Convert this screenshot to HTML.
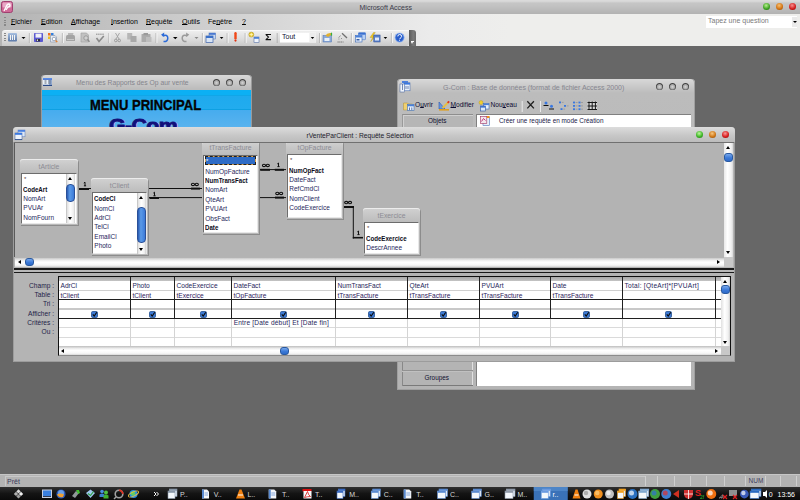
<!DOCTYPE html>
<html><head><meta charset="utf-8">
<style>
*{margin:0;padding:0;box-sizing:border-box}
html,body{width:800px;height:500px;overflow:hidden;background:#676767;font-family:"Liberation Sans",sans-serif;font-size:7px;color:#000;line-height:1}
.a{position:absolute}
svg{position:absolute;overflow:visible}
#title{left:0;top:0;width:800px;height:14px;background:linear-gradient(#dcdcdc 0,#d6d6d6 1.5px,#c6c6c6 3px,#c2c2c2 6px,#bababa 10px,#b2b2b2 14px)}
#menubar{left:0;top:14px;width:800px;height:32px;background:linear-gradient(90deg,#b4b4b4 0,#ebebeb 430px,#eeeeec 510px)}
#toolbar{left:2px;top:30px;width:407px;height:16px;background:linear-gradient(#eeeeee,#dcdcdc 55%,#c8c8c8);border-radius:3px 0 3px 0;border-top:1px solid #f8f8f8}
.mi{top:18px;font-size:7px;color:#000;white-space:nowrap}
.mi u,u{text-decoration:underline;text-underline-offset:0.3px;text-decoration-thickness:0.8px}
#status{left:0;top:474px;width:800px;height:13px;background:#b0b0b0;border-top:1px solid #d4d4d4}
#taskbar{left:0;top:487px;width:800px;height:13px;background:linear-gradient(#2e2e2e,#0e0e0e)}
.win{background:linear-gradient(#d8d8d8,#bcbcbc 14px,#b4b4b4);border-radius:4px 4px 0 0}
.circ{width:7px;height:7px;border-radius:50%;position:absolute}
.gc{background:radial-gradient(circle at 50% 55%,#d8d8d8 0,#a4a4a4 45%,#3c3c3c 62%,#5a5a5a 85%,#9a9a9a 100%)}
.t{white-space:nowrap}
</style></head><body>
<!-- TITLE BAR -->
<div id="title" class="a"></div>
<svg class="a" style="left:1px;top:1px" width="12" height="12" viewBox="0 0 12 12"><rect x="0.5" y="0.5" width="11" height="11" rx="2" fill="#d06a98" stroke="#a04070"/><rect x="1.5" y="1.5" width="9" height="5" rx="1" fill="#e8a8c6"/><path d="M3 10 L6 4 Q8 2 9 4 Q9 6 7 6 L5 9" stroke="#fff" stroke-width="1.3" fill="none"/></svg>
<div class="a t" style="left:359.5px;top:4px;font-size:7px;color:#3a3a4a">Microsoft Access</div>
<div class="circ" style="left:763px;top:3px;background:radial-gradient(circle at 45% 35%,#b8f090,#3aa020 60%,#1d6010)"></div>
<div class="circ" style="left:776px;top:3px;background:radial-gradient(circle at 45% 35%,#f8c070,#d07010 60%,#804000)"></div>
<div class="circ" style="left:789px;top:3px;background:radial-gradient(circle at 45% 35%,#f89090,#d01818 60%,#800000)"></div>

<!-- MENU BAR -->
<div id="menubar" class="a"></div>
<div class="a" style="left:4px;top:17px;width:2px;height:10px;background:repeating-linear-gradient(#888 0 1px,transparent 1px 2.5px)"></div>
<div class="a mi" style="left:11px"><u>F</u>ichier</div>
<div class="a mi" style="left:41px"><u>E</u>dition</div>
<div class="a mi" style="left:71px"><u>A</u>ffichage</div>
<div class="a mi" style="left:111px"><u>I</u>nsertion</div>
<div class="a mi" style="left:146px"><u>R</u>equête</div>
<div class="a mi" style="left:182px"><u>O</u>utils</div>
<div class="a mi" style="left:208px">Fe<u>n</u>être</div>
<div class="a mi" style="left:242px"><u>?</u></div>
<div class="a" style="left:706px;top:16px;width:91px;height:12px;background:#fff"></div>
<div class="a" style="left:708px;top:17px;font-size:7px;color:#7a7a7a">Tapez une question</div>
<div class="a" style="left:792px;top:17px;width:5px;height:10px;background:#eaeaea"></div><div class="a" style="left:792.6px;top:21px;width:0;height:0;border-left:2px solid transparent;border-right:2px solid transparent;border-top:2px solid #000"></div>

<!-- TOOLBAR -->
<div id="toolbar" class="a"></div>
<div class="a" style="left:409px;top:30px;width:6.5px;height:16px;background:linear-gradient(90deg,#5a5a5a,#7a7a7a 60%,#6a6a6a);border-radius:0 3px 0 0"></div>
<div class="a" style="left:410.5px;top:40.5px;width:3.5px;height:1px;background:#fff"></div>
<div class="a" style="left:410.5px;top:42px;width:0;height:0;border-left:1.75px solid transparent;border-right:1.75px solid transparent;border-top:2px solid #fff"></div>
<div class="a" style="left:4px;top:33px;width:2px;height:10px;background:repeating-linear-gradient(#888 0 1px,transparent 1px 2.5px)"></div>
<!-- icons -->
<svg class="a" style="left:0;top:29px" width="420" height="17" viewBox="0 0 420 17">
 <defs>
  <linearGradient id="gb" x1="0" y1="0" x2="0" y2="1"><stop offset="0" stop-color="#a8c0e0"/><stop offset="1" stop-color="#5a78a8"/></linearGradient>
  <linearGradient id="gw" x1="0" y1="0" x2="0" y2="1"><stop offset="0" stop-color="#9ab8f0"/><stop offset="1" stop-color="#3a68b8"/></linearGradient>
 </defs>
 <g fill="#000">
  <path d="M21.5 8h4l-2 2z"/><path d="M173 8h4.5l-2.2 2.2z"/><path d="M194.5 8h4l-2 2z" fill="#888"/>
  <path d="M219.8 8h3.6l-1.8 2z"/><path d="M383.6 8h3.6l-1.8 2z"/>
 </g>
 <g stroke="#a8a8a8" stroke-width=".8">
  <path d="M29.4 4v10M108.9 4v10M156 4v10M202.4 4v10M227.2 4v10M245.2 4v10M277.2 4v10M319.5 4v10M351.4 4v10M391.4 4v10M62.4 4v10"/>
 </g>
 <g stroke="#ffffff" stroke-width=".8">
  <path d="M30.3 4v10M109.8 4v10M156.9 4v10M203.3 4v10M228.1 4v10M246.1 4v10M320.4 4v10M352.3 4v10M392.3 4v10M63.3 4v10"/>
 </g>
 <!-- view icon -->
 <rect x="8" y="4" width="9" height="8.5" rx="1" fill="url(#gb)"/><path d="M10.5 6v5M12.5 6v5M14.5 6v5" stroke="#f4f4f4" stroke-width="1"/>
 <!-- save -->
 <rect x="34" y="4" width="9" height="9" rx=".8" fill="#5a58d0"/><rect x="35.5" y="4.6" width="6" height="4" fill="#f0f0f8"/><rect x="36" y="10" width="4" height="2.5" fill="#303040"/><rect x="36.8" y="10.4" width="1.2" height="1.6" fill="#ddd"/>
 <!-- db icon -->
 <rect x="48" y="4" width="2.5" height="2.5" fill="#f07020"/><rect x="51" y="4" width="2.5" height="2.5" fill="#3080e0"/><rect x="48" y="7.5" width="2.5" height="2.5" fill="#f0c020"/><rect x="51" y="7.5" width="2" height="2" fill="#40a040"/>
 <path d="M50.5 6.5h4.5l1.5 1.5v5h-6z" fill="#e8ecf4" stroke="#8090a8" stroke-width=".6"/><circle cx="54" cy="10" r="1.8" fill="#fff" stroke="#7a8aa0" stroke-width=".7"/><path d="M55.5 11.5l1.8 1.6" stroke="#e08030" stroke-width="1.4"/>
 <!-- print -->
 <path d="M66 7.5q0-1.5 1.5-1.5h6q1.5 0 1.5 1.5v4.5h-9z" fill="#a4a4a4"/><path d="M68 4h5.5l-.5 2h-5z" fill="#b8b8b8"/><path d="M67 10.5h7" stroke="#c8c8c8"/>
 <!-- preview -->
 <path d="M81 4h5.5l2 2v7h-7.5z" fill="#c2c2c2" stroke="#a0a0a0" stroke-width=".6"/><circle cx="86" cy="9" r="2.2" fill="#d0d0d0" stroke="#909090" stroke-width=".8"/><path d="M87.5 10.5l2 2.2" stroke="#8a8a8a" stroke-width="1.3"/>
 <!-- spell -->
 <path d="M96 5.2h8" stroke="#8a8a8a" stroke-width="1" stroke-dasharray="1.5 .6"/><path d="M96.5 9l2.5 3.5 4.8-5.6" stroke="#8a8a8a" stroke-width="1.6" fill="none"/>
 <!-- cut -->
 <path d="M115.5 4l3.5 6M119.5 4l-3.5 6" stroke="#a0a0a0" stroke-width=".9"/><circle cx="115.8" cy="11.5" r="1.3" fill="none" stroke="#9a9a9a" stroke-width="1"/><circle cx="119.2" cy="11.5" r="1.3" fill="none" stroke="#9a9a9a" stroke-width="1"/>
 <!-- copy -->
 <rect x="127.2" y="4" width="5" height="6.5" fill="#b6b6b6"/><rect x="130.5" y="7" width="6" height="6" fill="#a8a8a8"/>
 <!-- paste -->
 <rect x="141.5" y="5" width="9" height="8" rx=".5" fill="#ababab"/><rect x="143.5" y="4" width="4.5" height="2.2" fill="#9a9a9a"/><rect x="146" y="8" width="5.5" height="5" fill="#bdbdbd"/>
 <!-- undo -->
 <path d="M162.5 6.8Q167.8 5 167.8 9Q167.8 12.8 163.5 12.6" stroke="#2a6ad8" stroke-width="1.5" fill="none"/><path d="M161 5.8l3.2-2.2v4.4z" fill="#2a6ad8"/>
 <!-- redo -->
 <path d="M187.5 6.8Q182.2 5 182.2 9Q182.2 12.8 186.5 12.6" stroke="#9a9a9a" stroke-width="1.5" fill="none"/><path d="M189.3 5.8l-3.2-2.2v4.4z" fill="#9a9a9a"/>
 <!-- window icon -->
 <rect x="209" y="4" width="6.5" height="6" fill="#c8d8f0" stroke="#5a80c0" stroke-width=".6"/><rect x="209" y="4" width="6.5" height="1.8" fill="#4a78d0"/>
 <rect x="206" y="7" width="7" height="6.5" fill="#d8e4f4" stroke="#3a60a8" stroke-width=".7"/><rect x="206" y="7" width="7" height="2" fill="#3a70c8"/>
 <!-- ! -->
 <path d="M235.5 4.2v5" stroke="#f04818" stroke-width="2.4" stroke-linecap="round"/><circle cx="235.5" cy="11.6" r="1.1" fill="#e03010"/>
 <!-- show table -->
 <circle cx="251.3" cy="5.6" r="2.5" fill="#e8c830" stroke="#a08010" stroke-width=".4"/><path d="M251.3 3.8v3.6M249.5 5.6h3.6" stroke="#fff6c0" stroke-width=".8"/><rect x="254" y="8" width="5" height="5.5" fill="#f0f4fa" stroke="#3a5a98" stroke-width=".5"/><rect x="254" y="8" width="5" height="1.8" fill="#4a80d8"/>
 <!-- sigma -->
 <path d="M265.6 5.4h5.4M266 5.6l2.5 2.5-2.5 2.5M265.6 10.6h5.4" stroke="#101010" stroke-width="1.05" fill="none"/>
 <!-- combo -->
 <rect x="280" y="3.7" width="36" height="9.8" fill="#fff"/><rect x="309.4" y="4" width="6.4" height="9.3" fill="#ececec"/>
 <path d="M310.8 8h3.4l-1.7 2z" fill="#000"/>
 <text x="282" y="10.2" font-family="Liberation Sans" font-size="7" fill="#101030">Tout</text>
 <!-- properties -->
 <rect x="323" y="6.5" width="8.5" height="6.5" fill="#8aa8d8" stroke="#4a70b0" stroke-width=".5"/><rect x="324.5" y="9" width="5" height="3" fill="#e8f0fa"/><path d="M325.5 6.5q1.5-3 5.5-2.5l1 1.5-4 2.5z" fill="#e0b030"/><path d="M331.5 3.7v3" stroke="#30b040" stroke-width="1.2"/>
 <!-- build -->
 <path d="M342 4.2l5 4.8" stroke="#707070" stroke-width="1.3"/><path d="M340.5 6.5l-1.8 2.2M338.4 10h1M341 9.5h1" stroke="#808080" stroke-width=".8"/><path d="M337.5 13h6" stroke="#707070" stroke-width="1" stroke-dasharray="1.2 .6"/>
 <!-- db window -->
 <rect x="358.5" y="3.7" width="7" height="7" rx=".6" fill="#b8d0f4" stroke="#4a78c8" stroke-width=".6"/><rect x="358.5" y="3.7" width="7" height="2" fill="#3a70d0"/>
 <rect x="355.5" y="6.5" width="6.5" height="6.5" fill="#e8f0fa" stroke="#3a68b8" stroke-width=".6"/><rect x="355.5" y="6.5" width="6.5" height="2" fill="#4a80d8"/><rect x="356.5" y="10" width="3" height="1.5" fill="#3a60a8"/>
 <!-- new object -->
 <path d="M373.5 3.5l-3.5 5h2.5l-1.8 4.2 4.6-5.6h-2.4l2.4-3.6z" fill="#f0c820" stroke="#a08010" stroke-width=".3"/><rect x="373.8" y="6" width="6.3" height="7" fill="#5a80c8" stroke="#2a4a90" stroke-width=".5"/><rect x="375" y="8.5" width="4" height="3" fill="#e0e8f8"/>
 <!-- help -->
 <circle cx="399.6" cy="8.6" r="4.7" fill="#3870d8" stroke="#b8ccf0" stroke-width=".7"/><circle cx="399.6" cy="8.6" r="3.3" fill="#2a5cc8"/><path d="M397.8 7.4q0-1.9 1.9-1.9t1.9 1.9q0 1-1.4 1.8l-.5 1" stroke="#fff" stroke-width="1" fill="none"/><circle cx="399.6" cy="11.2" r=".55" fill="#fff"/>
</svg>
<!-- Menu des Rapports window -->
<div class="a win" style="left:41px;top:75px;width:211px;height:60px;box-shadow:inset 1px 0 #9a9a9a,inset -1px 0 #9a9a9a"></div>
<svg style="left:43px;top:78px" width="9" height="8"><defs><linearGradient id="ib" x1="0" y1="0" x2="0" y2="1"><stop offset="0" stop-color="#6a9ef0"/><stop offset="1" stop-color="#2a5ac8"/></linearGradient></defs><rect x="0" y="0" width="9" height="8" fill="#e8f0fa"/><rect x="0" y="0" width="9" height="1.8" fill="url(#ib)"/><rect x="0" y="6.8" width="9" height="1.2" fill="#2a4a88"/><path d="M1.5 3h2M5 3h3M1.5 5h2M5 5h3" stroke="#404850" stroke-width=".8"/><rect x="6" y="2" width="3" height="5" fill="#5a7ab0" opacity=".6"/></svg>
<div class="a t" style="left:76px;top:79.5px;color:#84848c;font-size:6.75px">Menu des Rapports des Op aur vente</div>
<div class="circ gc" style="left:213px;top:79px"></div>
<div class="circ gc" style="left:226px;top:79px"></div>
<div class="circ gc" style="left:239px;top:79px"></div>
<div class="a" style="left:42px;top:90px;width:209px;height:40px;background:linear-gradient(#0cb0f4 0,#0cb0f4 5px,#10a6e8 5px,#10a6e8 6px,#1eaaee 6px,#22acee 19px,#0ea0e2 19px,#0ea0e2 20px,#46acee 20px,#5cb4ee 40px)"></div>
<div class="a t" style="left:89.5px;top:97.5px;font-family:'Liberation Sans';font-weight:bold;font-size:14px;transform:scaleX(0.93);transform-origin:0 0;color:#050505;-webkit-text-stroke:0.35px #050505">MENU PRINCIPAL</div>
<div class="a" style="left:42px;top:90px;width:209px;height:37px;overflow:hidden"><div class="a t" style="left:68.2px;top:26.3px;font-family:'Liberation Sans';font-weight:bold;font-size:19px;color:#f08cc8;transform:scaleX(1.12);transform-origin:0 0;letter-spacing:-0.5px">G-Com</div><div class="a t" style="left:67px;top:25.5px;font-family:'Liberation Sans';font-weight:bold;font-size:19px;color:#10107a;-webkit-text-stroke:0.8px #10107a;transform:scaleX(1.12);transform-origin:0 0;letter-spacing:-0.5px">G-Com</div></div>

<!-- G-Com database window -->
<div class="a win" style="left:397px;top:79px;width:298px;height:311px;box-shadow:inset 1px 0 #a0a0a0,inset -1px 0 #a0a0a0,inset 0 -1px #a0a0a0"></div>
<svg style="left:400px;top:81px" width="10" height="11"><rect x="2" y="0" width="6" height="9" fill="#d8e8fa"/><rect x="2" y="0" width="6" height="2" fill="#4a80e0"/><rect x="4" y="1.8" width="6" height="8" fill="#e8f0fa" stroke="#3a60a8" stroke-width=".5"/><rect x="4" y="1.8" width="6" height="1.8" fill="#3a78e0"/><rect x="0" y="3" width="4.5" height="8" fill="#f0f4fa" stroke="#3a5a98" stroke-width=".5"/><path d="M2.5 3v6M6 5v3M8 5v3" stroke="#3a5a98" stroke-width=".7"/></svg>
<div class="a t" style="left:443px;top:84px;color:#868690">G-Com : Base de données (format de fichier Access 2000)</div>
<div class="circ gc" style="left:656px;top:83px"></div>
<div class="circ gc" style="left:669px;top:83px"></div>
<div class="circ gc" style="left:682px;top:83px"></div>
<!-- db toolbar -->
<svg style="left:403px;top:99.5px" width="200" height="12">
 <path d="M0.5 3h4l1 1h4v6h-9z" fill="#f0d070" stroke="#b09030" stroke-width=".5"/><rect x="4.5" y="4.5" width="6.5" height="6" fill="#e8f0fa" stroke="#3a6ab0" stroke-width=".6"/><rect x="4.5" y="4.5" width="6.5" height="1.8" fill="#4a80d8"/><path d="M6.5 7.5v2.5M8.8 7.5v2.5" stroke="#3a5aa0" stroke-width=".8"/>
 <path d="M36 2v7h6z" fill="#6a98e0" stroke="#2a58b0" stroke-width=".6"/><path d="M36 9.8h10" stroke="#e0a020" stroke-width="1.6"/><path d="M39.5 8l6-6" stroke="#e8c040" stroke-width="1.8"/><path d="M44.6 2.9l1.6-1.6" stroke="#e03020" stroke-width="1.8"/>
 <circle cx="78" cy="2.6" r="2" fill="#f0d030" stroke="#b09020" stroke-width=".4"/><rect x="80.5" y="3.5" width="5.5" height="5.5" fill="#e8f0fa" stroke="#3a6ab0" stroke-width=".6"/><rect x="80.5" y="3.5" width="5.5" height="1.6" fill="#4a80d8"/><rect x="77.5" y="6" width="5" height="5" fill="#dce8f8" stroke="#2a50a0" stroke-width=".6"/><rect x="77.5" y="6" width="5" height="1.6" fill="#3a70d0"/>
 <path d="M119.2 1v11M137.5 1v11" stroke="#f0f0f0" stroke-width=".9"/>
 <path d="M124.3 1.2l6.6 7.2M130.9 1.2l-6.6 7.2" stroke="#202020" stroke-width="1.3"/>
 <circle cx="143" cy="3" r="1.5" fill="#3a78e0"/><path d="M140.5 5.5h5" stroke="#101010" stroke-width="1"/><circle cx="148.5" cy="6.3" r="1.5" fill="#3a78e0"/><path d="M146 9h5" stroke="#101010" stroke-width="1"/>
 <rect x="156" y="1.5" width="2" height="1.8" fill="#3a78e0"/><path d="M158.8 2.4h1.8" stroke="#888" stroke-width=".6"/>
 <rect x="161" y="5" width="2" height="1.8" fill="#3a78e0"/><path d="M163.8 5.9h1.8" stroke="#888" stroke-width=".6"/>
 <rect x="157.5" y="8.2" width="2" height="1.8" fill="#3a78e0"/><path d="M160.3 9.1h1.8" stroke="#888" stroke-width=".6"/>
 <g fill="#3a78e0"><rect x="170" y="1.6" width="2" height="1.8"/><rect x="170" y="5" width="2" height="1.8"/><rect x="170" y="8.3" width="2" height="1.8"/><rect x="175.5" y="1.6" width="2" height="1.8"/><rect x="175.5" y="5" width="2" height="1.8"/><rect x="175.5" y="8.3" width="2" height="1.8"/></g>
 <g stroke="#888" stroke-width=".6"><path d="M172.6 2.5h2M172.6 5.9h2M172.6 9.2h2M178 2.5h2M178 5.9h2M178 9.2h2"/></g>
 <rect x="184.5" y="1.5" width="9.5" height="8.5" fill="#d8d8d8"/><path d="M184.5 2.5h9.5M184.5 6h9.5M184.5 9.5h9.5" stroke="#181818" stroke-width="1.2"/><path d="M186 1.5v8.5M189.2 1.5v8.5M192.4 1.5v8.5" stroke="#181818" stroke-width="1"/>
</svg>
<div class="a t" style="left:415px;top:102.3px;color:#0a0a30;font-size:6.6px">O<u>u</u>vrir</div>
<div class="a t" style="left:450.5px;top:102.3px;color:#0a0a30;font-size:6.6px"><u>M</u>odifier</div>
<div class="a t" style="left:490.5px;top:102.3px;color:#0a0a30;font-size:6.6px">Nou<u>v</u>eau</div>
<!-- objets column -->
<div class="a" style="left:402px;top:114px;width:71px;height:272px;background:#b4b4b4;box-shadow:inset 1px 1px #888,inset -1px 0 #e0e0e0"></div>
<div class="a" style="left:402px;top:114px;width:71px;height:13px;background:#b6b6b6;border-top:1px solid #8e8e8e;border-left:1px solid #9a9a9a;box-shadow:inset 1px 1px #d0d0d0"></div>
<div class="a t" style="left:428px;top:118.2px;color:#101030;font-size:6.4px">Objets</div>
<div class="a" style="left:402px;top:370px;width:71px;height:2px;background:linear-gradient(#7a7a7a,#d8d8d8)"></div>
<div class="a" style="left:403px;top:385px;width:70px;height:1px;background:#7a7a7a"></div>
<div class="a t" style="left:424.5px;top:375px;color:#101030;font-size:6.4px">Groupes</div>
<!-- white list -->
<div class="a" style="left:476px;top:114px;width:215px;height:272px;background:#fff;box-shadow:inset 1px 1px #808080"></div>
<svg style="left:480px;top:116px" width="10" height="10"><rect x="3" y="1" width="6.5" height="8.5" fill="#e8f0fa" stroke="#4a70b8" stroke-width=".6"/><rect x=".3" y=".3" width="6.5" height="7" fill="#f4e8ee" stroke="#a03060" stroke-width=".6"/><path d="M1.5 5.5l2-3 2 2" stroke="#c04080" stroke-width="1" fill="none"/><rect x="7" y="0" width="2.5" height="2" fill="#f09020"/></svg>
<div class="a t" style="left:499px;top:118.3px;color:#1a1a48;font-size:6.4px">Créer une requête en mode Création</div>
<div class="a" style="left:13px;top:127px;width:722px;height:235px;background:#b4b4b4;border-radius:4px 4px 0 0;box-shadow:inset 1px 0 #9c9c9c,inset -1px 0 #9c9c9c,inset 0 -1px #9c9c9c"></div>
<div class="a" style="left:13px;top:127px;width:722px;height:15px;background:linear-gradient(#dcdcdc,#c6c6c6 60%,#bcbcbc);border-radius:4px 4px 0 0"></div>
<div class="a" style="left:14px;top:142px;width:720px;height:1px;background:#707070"></div>
<svg style="left:15px;top:130px" width="10" height="10"><rect x="3" y="0" width="7" height="6.8" fill="#dce8f8" stroke="#5a7ab8" stroke-width=".5"/><rect x="3" y="0" width="7" height="1.8" fill="#4a80e0"/><rect x="0" y="3" width="7" height="6.8" fill="#eef4fc" stroke="#3a5a98" stroke-width=".5"/><rect x="0" y="3" width="7" height="1.8" fill="#3a78e0"/><rect x="0" y="9" width="7" height=".8" fill="#2a4a88"/></svg>
<div class="a t" style="left:306.5px;top:133.1px;color:#1c1c2c;font-size:6.7px">rVenteParClient : Requête Sélection</div>
<div class="circ" style="left:696px;top:131px;background:radial-gradient(circle at 45% 35%,#c0f8a0,#40b828 55%,#1a6a10)"></div>
<div class="circ" style="left:709px;top:131px;background:radial-gradient(circle at 45% 35%,#f8c880,#d07818 55%,#804000)"></div>
<div class="circ" style="left:722px;top:131px;background:radial-gradient(circle at 45% 35%,#f89898,#d82020 55%,#800000)"></div>
<div class="a" style="left:14px;top:143px;width:710px;height:114px;background:#b3b3b3;box-shadow:inset 1px 0 #5a5a5a"></div>
<div class="a" style="left:724px;top:143px;width:9px;height:114px;background:linear-gradient(90deg,#e8e8e8,#fff 40%,#f0f0f0 80%,#d8d8d8)"></div>
<div class="a" style="left:726px;top:146px;width:0;height:0;border-left:2.5px solid transparent;border-right:2.5px solid transparent;border-bottom:3px solid #000"></div>
<div class="a" style="left:726px;top:251px;width:0;height:0;border-left:2.5px solid transparent;border-right:2.5px solid transparent;border-top:3px solid #000"></div>
<div class="a" style="left:724px;top:153px;width:9px;height:9px;border-radius:3px;background:linear-gradient(#78a8ec,#3c7ad8 55%,#2e6ac8);border:1px solid #2a5aa0"></div>
<div class="a" style="left:15px;top:257.5px;width:709px;height:9.5px;background:linear-gradient(#c8c8c8,#f4f4f4 30%,#fff 50%,#f6f6f6 80%,#d4d4d4)"></div>
<div class="a" style="left:18px;top:260px;width:0;height:0;border-top:2.5px solid transparent;border-bottom:2.5px solid transparent;border-right:3px solid #000"></div>
<div class="a" style="left:717px;top:260px;width:0;height:0;border-top:2.5px solid transparent;border-bottom:2.5px solid transparent;border-left:3px solid #000"></div>
<div class="a" style="left:25px;top:258px;width:8.5px;height:8.3px;border-radius:3px;background:linear-gradient(#78a8ec,#3c7ad8 55%,#2e6ac8);border:1px solid #2a5aa0"></div>
<div class="a" style="left:724px;top:257px;width:9px;height:10px;background:#c8c8c8"></div>
<div class="a" style="left:14px;top:267px;width:720px;height:6px;background:linear-gradient(#b4b4b4 0,#b4b4b4 1px,#1a1a1a 1px,#1a1a1a 3px,#b8b8b8 3px,#b8b8b8 5px,#1a1a1a 5px)"></div>
<div class="a" style="left:14px;top:143px;width:710px;height:114px;overflow:hidden"><div class="a" style="left:-14px;top:-143px;width:800px;height:500px">
<svg style="left:0;top:0" width="800" height="500">
<path d="M77 188.5H202" stroke="#101010" stroke-width="1"/><path d="M79 189H89" stroke="#101010" stroke-width="2"/><path d="M191 188.6H200" stroke="#101010" stroke-width="2"/><path d="M85.0 182.2V185.79999999999998M83.8 183.1L85.0 182.2M83.9 185.79999999999998H86.1" stroke="#101010" stroke-width="1"/><ellipse cx="193" cy="184.4" rx="1.6" ry="1.2" fill="none" stroke="#101010" stroke-width="1.1"/><ellipse cx="196.8" cy="184.4" rx="1.6" ry="1.2" fill="none" stroke="#101010" stroke-width="1.1"/><path d="M148 197.6H287" stroke="#101010" stroke-width="1"/><path d="M149.5 198H159" stroke="#101010" stroke-width="2"/><path d="M275 197.6H284" stroke="#101010" stroke-width="2"/><path d="M154.5 192.2V195.79999999999998M153.3 193.1L154.5 192.2M153.4 195.79999999999998H155.6" stroke="#101010" stroke-width="1"/><ellipse cx="277.3" cy="193.4" rx="1.6" ry="1.2" fill="none" stroke="#101010" stroke-width="1.1"/><ellipse cx="281.1" cy="193.4" rx="1.6" ry="1.2" fill="none" stroke="#101010" stroke-width="1.1"/><path d="M259 169.6H287" stroke="#101010" stroke-width="1"/><path d="M260.2 169.8H270" stroke="#101010" stroke-width="2"/><path d="M274.8 169.8H284" stroke="#101010" stroke-width="2"/><path d="M278.5 163V166.6M277.3 163.9L278.5 163M277.4 166.6H279.6" stroke="#101010" stroke-width="1"/><ellipse cx="264" cy="165.4" rx="1.6" ry="1.2" fill="none" stroke="#101010" stroke-width="1.1"/><ellipse cx="267.8" cy="165.4" rx="1.6" ry="1.2" fill="none" stroke="#101010" stroke-width="1.1"/><path d="M343 207H354" stroke="#101010" stroke-width="2"/><path d="M353.3 206V238.5" stroke="#101010" stroke-width="1"/><path d="M352.8 237.7H363.5" stroke="#101010" stroke-width="1.6"/><path d="M358.5 231V234.6M357.3 231.9L358.5 231M357.4 234.6H359.6" stroke="#101010" stroke-width="1"/><ellipse cx="346.2" cy="202.6" rx="1.6" ry="1.2" fill="none" stroke="#101010" stroke-width="1.1"/><ellipse cx="350.0" cy="202.6" rx="1.6" ry="1.2" fill="none" stroke="#101010" stroke-width="1.1"/>
</svg>
<div class="a" style="left:20px;top:159px;width:58px;height:66px;background:linear-gradient(#d2d2d2,#c8c8c8 6px,#bebebe 13px,#b8b8b8 15px);border-radius:3px 3px 0 0;box-shadow:1px 1px 0 #8c8c8c,inset 0 1px #ececec"></div>
<div class="a t" style="left:20px;top:164px;width:58px;text-align:center;color:#8c8c94;font-size:6.8px">tArticle</div>
<div class="a" style="left:21px;top:173px;width:56px;height:51px;background:#fff;border:1px solid #6c6c6c;border-right-color:#e8e8e8;border-bottom-color:#e8e8e8"></div>
<div class="a t" style="left:24px;top:176.3px;font-size:6px;color:#604040">*</div>
<div class="a t" style="left:23.3px;top:186.5px;font-size:6.5px;font-weight:bold;color:#0c0c20;font-size:6.6px;transform:scaleX(0.93);transform-origin:0 0">CodeArt</div>
<div class="a t" style="left:23.3px;top:195.9px;font-size:6.5px;color:#26265a">NomArt</div>
<div class="a t" style="left:23.3px;top:205.3px;font-size:6.5px;color:#26265a">PVUAr</div>
<div class="a t" style="left:23.3px;top:214.70000000000002px;font-size:6.5px;color:#26265a">NomFourn</div>
<div class="a" style="left:66px;top:174px;width:9px;height:49px;background:linear-gradient(90deg,#e0e0e0,#fff 40%,#f0f0f0 80%,#d0d0d0);border-left:1px solid #c8c8c8"></div>
<div class="a" style="left:68px;top:177px;width:0;height:0;border-left:2.5px solid transparent;border-right:2.5px solid transparent;border-bottom:3px solid #000"></div>
<div class="a" style="left:68px;top:217px;width:0;height:0;border-left:2.5px solid transparent;border-right:2.5px solid transparent;border-top:3px solid #000"></div>
<div class="a" style="left:66px;top:184px;width:9px;height:18px;border-radius:4px;background:linear-gradient(90deg,#2a5ab0,#5a9ae8 40%,#3c7ad8);border:1px solid #2a5098"></div>
<div class="a" style="left:91px;top:178px;width:57px;height:77px;background:linear-gradient(#d2d2d2,#c8c8c8 6px,#bebebe 13px,#b8b8b8 15px);border-radius:3px 3px 0 0;box-shadow:1px 1px 0 #8c8c8c,inset 0 1px #ececec"></div>
<div class="a t" style="left:91px;top:183px;width:57px;text-align:center;color:#8c8c94;font-size:6.8px">tClient</div>
<div class="a" style="left:92px;top:192px;width:55px;height:62px;background:#fff;border:1px solid #6c6c6c;border-right-color:#e8e8e8;border-bottom-color:#e8e8e8"></div>
<div class="a t" style="left:94.3px;top:196.1px;font-size:6.5px;font-weight:bold;color:#0c0c20;font-size:6.6px;transform:scaleX(0.93);transform-origin:0 0">CodeCl</div>
<div class="a t" style="left:94.3px;top:205.5px;font-size:6.5px;color:#26265a">NomCl</div>
<div class="a t" style="left:94.3px;top:214.9px;font-size:6.5px;color:#26265a">AdrCl</div>
<div class="a t" style="left:94.3px;top:224.3px;font-size:6.5px;color:#26265a">TelCl</div>
<div class="a t" style="left:94.3px;top:233.70000000000002px;font-size:6.5px;color:#26265a">EmailCl</div>
<div class="a t" style="left:94.3px;top:243.10000000000002px;font-size:6.5px;color:#26265a">Photo</div>
<div class="a" style="left:137px;top:193px;width:9px;height:61px;background:linear-gradient(90deg,#e0e0e0,#fff 40%,#f0f0f0 80%,#d0d0d0);border-left:1px solid #c8c8c8"></div>
<div class="a" style="left:139px;top:196px;width:0;height:0;border-left:2.5px solid transparent;border-right:2.5px solid transparent;border-bottom:3px solid #000"></div>
<div class="a" style="left:139px;top:248px;width:0;height:0;border-left:2.5px solid transparent;border-right:2.5px solid transparent;border-top:3px solid #000"></div>
<div class="a" style="left:137px;top:207px;width:9px;height:36px;border-radius:4px;background:linear-gradient(90deg,#2a5ab0,#5a9ae8 40%,#3c7ad8);border:1px solid #2a5098"></div>
<div class="a" style="left:202px;top:141px;width:57px;height:93px;background:linear-gradient(#d2d2d2,#c8c8c8 6px,#bebebe 13px,#b8b8b8 15px);border-radius:3px 3px 0 0;box-shadow:1px 1px 0 #8c8c8c,inset 0 1px #ececec"></div>
<div class="a t" style="left:202px;top:145px;width:57px;text-align:center;color:#8c8c94;font-size:6.8px">tTransFacture</div>
<div class="a" style="left:203px;top:155px;width:55px;height:78px;background:#fff;border:1px solid #6c6c6c;border-right-color:#e8e8e8;border-bottom-color:#e8e8e8"></div>
<div class="a" style="left:205px;top:156px;width:51px;height:9px;background:#2f6cc6;border:1px solid #d8a050"></div>
<div class="a" style="left:205px;top:156px;width:51px;height:9px;border:1px dashed #202020"></div>
<div class="a t" style="left:206px;top:158.3px;font-size:6px;color:#fff">*</div>
<div class="a t" style="left:205.3px;top:168.5px;font-size:6.5px;color:#26265a">NumOpFacture</div>
<div class="a t" style="left:205.3px;top:177.9px;font-size:6.5px;font-weight:bold;color:#0c0c20;font-size:6.6px;transform:scaleX(0.93);transform-origin:0 0">NumTransFact</div>
<div class="a t" style="left:205.3px;top:187.3px;font-size:6.5px;color:#26265a">NomArt</div>
<div class="a t" style="left:205.3px;top:196.70000000000002px;font-size:6.5px;color:#26265a">QteArt</div>
<div class="a t" style="left:205.3px;top:206.10000000000002px;font-size:6.5px;color:#26265a">PVUArt</div>
<div class="a t" style="left:205.3px;top:215.50000000000003px;font-size:6.5px;color:#26265a">ObsFact</div>
<div class="a t" style="left:205.3px;top:224.90000000000003px;font-size:6.5px;font-weight:bold;color:#0c0c20;font-size:6.6px;transform:scaleX(0.93);transform-origin:0 0">Date</div>
<div class="a" style="left:286px;top:141px;width:57px;height:78px;background:linear-gradient(#d2d2d2,#c8c8c8 6px,#bebebe 13px,#b8b8b8 15px);border-radius:3px 3px 0 0;box-shadow:1px 1px 0 #8c8c8c,inset 0 1px #ececec"></div>
<div class="a t" style="left:286px;top:145px;width:57px;text-align:center;color:#8c8c94;font-size:6.8px">tOpFacture</div>
<div class="a" style="left:287px;top:154px;width:55px;height:64px;background:#fff;border:1px solid #6c6c6c;border-right-color:#e8e8e8;border-bottom-color:#e8e8e8"></div>
<div class="a t" style="left:290px;top:157.3px;font-size:6px;color:#604040">*</div>
<div class="a t" style="left:289.3px;top:167.5px;font-size:6.5px;font-weight:bold;color:#0c0c20;font-size:6.6px;transform:scaleX(0.93);transform-origin:0 0">NumOpFact</div>
<div class="a t" style="left:289.3px;top:176.9px;font-size:6.5px;color:#26265a">DateFact</div>
<div class="a t" style="left:289.3px;top:186.3px;font-size:6.5px;color:#26265a">RefCmdCl</div>
<div class="a t" style="left:289.3px;top:195.70000000000002px;font-size:6.5px;color:#26265a">NomClient</div>
<div class="a t" style="left:289.3px;top:205.10000000000002px;font-size:6.5px;color:#26265a">CodeExercice</div>
<div class="a" style="left:363px;top:208px;width:57px;height:47px;background:linear-gradient(#d2d2d2,#c8c8c8 6px,#bebebe 13px,#b8b8b8 15px);border-radius:3px 3px 0 0;box-shadow:1px 1px 0 #8c8c8c,inset 0 1px #ececec"></div>
<div class="a t" style="left:363px;top:213px;width:57px;text-align:center;color:#8c8c94;font-size:6.8px">tExercice</div>
<div class="a" style="left:364px;top:222px;width:55px;height:32px;background:#fff;border:1px solid #6c6c6c;border-right-color:#e8e8e8;border-bottom-color:#e8e8e8"></div>
<div class="a t" style="left:367px;top:225.3px;font-size:6px;color:#604040">*</div>
<div class="a t" style="left:366.3px;top:235.5px;font-size:6.5px;font-weight:bold;color:#0c0c20;font-size:6.6px;transform:scaleX(0.93);transform-origin:0 0">CodeExercice</div>
<div class="a t" style="left:366.3px;top:244.9px;font-size:6.5px;color:#26265a">DescrAnnee</div>
</div></div>
<div class="a" style="left:58px;top:276px;width:673px;height:80px;background:#fff;border:1px solid #101010;border-bottom-color:#8c8c8c"></div>
<div class="a" style="left:59px;top:277px;width:662px;height:4px;background:linear-gradient(#a8a8a8,#c4c4c4)"></div>
<div class="a" style="left:59px;top:289.5px;width:662px;height:1px;background:#d0d0d0"></div>
<div class="a" style="left:59px;top:299px;width:662px;height:1px;background:#202020"></div>
<div class="a" style="left:59px;top:308px;width:662px;height:1.6px;background:#c8c8c8"></div>
<div class="a" style="left:59px;top:318px;width:662px;height:1.3px;background:#202020"></div>
<div class="a" style="left:59px;top:327px;width:662px;height:1px;background:#dadada"></div>
<div class="a" style="left:59px;top:336.5px;width:662px;height:1px;background:#dadada"></div>
<div class="a" style="left:130px;top:277px;width:1px;height:42px;background:#202020"></div>
<div class="a" style="left:130px;top:319px;width:1px;height:27px;background:#d4d4d4"></div>
<div class="a" style="left:174px;top:277px;width:1px;height:42px;background:#202020"></div>
<div class="a" style="left:174px;top:319px;width:1px;height:27px;background:#d4d4d4"></div>
<div class="a" style="left:231px;top:277px;width:1px;height:42px;background:#202020"></div>
<div class="a" style="left:231px;top:319px;width:1px;height:27px;background:#d4d4d4"></div>
<div class="a" style="left:335px;top:277px;width:1px;height:42px;background:#202020"></div>
<div class="a" style="left:335px;top:319px;width:1px;height:27px;background:#d4d4d4"></div>
<div class="a" style="left:407px;top:277px;width:1px;height:42px;background:#202020"></div>
<div class="a" style="left:407px;top:319px;width:1px;height:27px;background:#d4d4d4"></div>
<div class="a" style="left:479px;top:277px;width:1px;height:42px;background:#202020"></div>
<div class="a" style="left:479px;top:319px;width:1px;height:27px;background:#d4d4d4"></div>
<div class="a" style="left:550px;top:277px;width:1px;height:42px;background:#202020"></div>
<div class="a" style="left:550px;top:319px;width:1px;height:27px;background:#d4d4d4"></div>
<div class="a" style="left:622px;top:277px;width:1px;height:42px;background:#202020"></div>
<div class="a" style="left:622px;top:319px;width:1px;height:27px;background:#d4d4d4"></div>
<div class="a" style="left:714.5px;top:277px;width:1px;height:42px;background:#202020"></div>
<div class="a" style="left:714.5px;top:319px;width:1px;height:27px;background:#d4d4d4"></div>
<div class="a t" style="left:0;top:282.5px;width:54px;text-align:right;color:#1e1e48;font-size:6.6px">Champ :</div>
<div class="a t" style="left:0;top:292px;width:54px;text-align:right;color:#1e1e48;font-size:6.6px">Table :</div>
<div class="a t" style="left:0;top:301px;width:54px;text-align:right;color:#1e1e48;font-size:6.6px">Tri :</div>
<div class="a t" style="left:0;top:310.5px;width:54px;text-align:right;color:#1e1e48;font-size:6.6px">Afficher :</div>
<div class="a t" style="left:0;top:320px;width:54px;text-align:right;color:#1e1e48;font-size:6.6px">Critères :</div>
<div class="a t" style="left:0;top:329px;width:54px;text-align:right;color:#1e1e48;font-size:6.6px">Ou :</div>
<div class="a t" style="left:60.5px;top:283.1px;color:#26265a;font-size:6.6px;">AdrCl</div>
<div class="a t" style="left:60.5px;top:292.7px;color:#2e2260;font-size:6.6px">tClient</div>
<svg style="left:91.2px;top:311px" width="7" height="7"><rect x=".5" y=".5" width="6" height="6" rx="1.2" fill="#3d7ad4" stroke="#24508e" stroke-width=".8"/><path d="M1.8 3.3l1.4 1.8 2.6-3.8" stroke="#0a0a0a" stroke-width="1.1" fill="none"/></svg>
<div class="a t" style="left:132.5px;top:283.1px;color:#26265a;font-size:6.6px;">Photo</div>
<div class="a t" style="left:132.5px;top:292.7px;color:#2e2260;font-size:6.6px">tClient</div>
<svg style="left:149.2px;top:311px" width="7" height="7"><rect x=".5" y=".5" width="6" height="6" rx="1.2" fill="#3d7ad4" stroke="#24508e" stroke-width=".8"/><path d="M1.8 3.3l1.4 1.8 2.6-3.8" stroke="#0a0a0a" stroke-width="1.1" fill="none"/></svg>
<div class="a t" style="left:176.5px;top:283.1px;color:#26265a;font-size:6.6px;">CodeExercice</div>
<div class="a t" style="left:176.5px;top:292.7px;color:#2e2260;font-size:6.6px">tExercice</div>
<svg style="left:199.7px;top:311px" width="7" height="7"><rect x=".5" y=".5" width="6" height="6" rx="1.2" fill="#3d7ad4" stroke="#24508e" stroke-width=".8"/><path d="M1.8 3.3l1.4 1.8 2.6-3.8" stroke="#0a0a0a" stroke-width="1.1" fill="none"/></svg>
<div class="a t" style="left:233.5px;top:283.1px;color:#26265a;font-size:6.6px;">DateFact</div>
<div class="a t" style="left:233.5px;top:292.7px;color:#2e2260;font-size:6.6px">tOpFacture</div>
<svg style="left:280.2px;top:311px" width="7" height="7"><rect x=".5" y=".5" width="6" height="6" rx="1.2" fill="#3d7ad4" stroke="#24508e" stroke-width=".8"/><path d="M1.8 3.3l1.4 1.8 2.6-3.8" stroke="#0a0a0a" stroke-width="1.1" fill="none"/></svg>
<div class="a t" style="left:337.5px;top:283.1px;color:#26265a;font-size:6.6px;">NumTransFact</div>
<div class="a t" style="left:337.5px;top:292.7px;color:#2e2260;font-size:6.6px">tTransFacture</div>
<svg style="left:368.2px;top:311px" width="7" height="7"><rect x=".5" y=".5" width="6" height="6" rx="1.2" fill="#3d7ad4" stroke="#24508e" stroke-width=".8"/><path d="M1.8 3.3l1.4 1.8 2.6-3.8" stroke="#0a0a0a" stroke-width="1.1" fill="none"/></svg>
<div class="a t" style="left:409.5px;top:283.1px;color:#26265a;font-size:6.6px;">QteArt</div>
<div class="a t" style="left:409.5px;top:292.7px;color:#2e2260;font-size:6.6px">tTransFacture</div>
<svg style="left:440.2px;top:311px" width="7" height="7"><rect x=".5" y=".5" width="6" height="6" rx="1.2" fill="#3d7ad4" stroke="#24508e" stroke-width=".8"/><path d="M1.8 3.3l1.4 1.8 2.6-3.8" stroke="#0a0a0a" stroke-width="1.1" fill="none"/></svg>
<div class="a t" style="left:481.5px;top:283.1px;color:#26265a;font-size:6.6px;">PVUArt</div>
<div class="a t" style="left:481.5px;top:292.7px;color:#2e2260;font-size:6.6px">tTransFacture</div>
<svg style="left:511.7px;top:311px" width="7" height="7"><rect x=".5" y=".5" width="6" height="6" rx="1.2" fill="#3d7ad4" stroke="#24508e" stroke-width=".8"/><path d="M1.8 3.3l1.4 1.8 2.6-3.8" stroke="#0a0a0a" stroke-width="1.1" fill="none"/></svg>
<div class="a t" style="left:552.5px;top:283.1px;color:#26265a;font-size:6.6px;">Date</div>
<div class="a t" style="left:552.5px;top:292.7px;color:#2e2260;font-size:6.6px">tTransFacture</div>
<svg style="left:583.2px;top:311px" width="7" height="7"><rect x=".5" y=".5" width="6" height="6" rx="1.2" fill="#3d7ad4" stroke="#24508e" stroke-width=".8"/><path d="M1.8 3.3l1.4 1.8 2.6-3.8" stroke="#0a0a0a" stroke-width="1.1" fill="none"/></svg>
<div class="a t" style="left:624.5px;top:283.1px;color:#26265a;font-size:6.6px;letter-spacing:0.25px;">Total: [QteArt]*[PVUArt]</div>
<svg style="left:665.45px;top:311px" width="7" height="7"><rect x=".5" y=".5" width="6" height="6" rx="1.2" fill="#3d7ad4" stroke="#24508e" stroke-width=".8"/><path d="M1.8 3.3l1.4 1.8 2.6-3.8" stroke="#0a0a0a" stroke-width="1.1" fill="none"/></svg>
<div class="a t" style="left:233.7px;top:320.3px;color:#26265a;font-size:6.6px;letter-spacing:0.17px">Entre [Date début] Et [Date fin]</div>
<div class="a" style="left:721px;top:277px;width:9px;height:69px;background:linear-gradient(90deg,#e0e0e0,#fff 40%,#f0f0f0 80%,#d0d0d0)"></div>
<div class="a" style="left:723px;top:280px;width:0;height:0;border-left:2.5px solid transparent;border-right:2.5px solid transparent;border-bottom:3px solid #000"></div>
<div class="a" style="left:723px;top:341px;width:0;height:0;border-left:2.5px solid transparent;border-right:2.5px solid transparent;border-top:3px solid #000"></div>
<div class="a" style="left:721px;top:285px;width:9px;height:9px;border-radius:3px;background:linear-gradient(#78a8ec,#3c7ad8 55%,#2e6ac8);border:1px solid #2a5aa0"></div>
<div class="a" style="left:59px;top:346px;width:662px;height:9.3px;background:linear-gradient(#bdbdbd,#f0f0f0 30%,#fff 50%,#f8f8f8 80%,#d8d8d8)"></div>
<div class="a" style="left:61px;top:348.5px;width:0;height:0;border-top:2.5px solid transparent;border-bottom:2.5px solid transparent;border-right:3px solid #000"></div>
<div class="a" style="left:715px;top:348.5px;width:0;height:0;border-top:2.5px solid transparent;border-bottom:2.5px solid transparent;border-left:3px solid #000"></div>
<div class="a" style="left:280px;top:347px;width:8.5px;height:8px;border-radius:3px;background:linear-gradient(#78a8ec,#3c7ad8 55%,#2e6ac8);border:1px solid #2a5aa0"></div>
<div class="a" style="left:721px;top:346px;width:9px;height:9px;background:#c8c8c8"></div>
<div class="a" style="left:0;top:474px;width:800px;height:13px;background:#b3b3b3;border-top:1px solid #c6c6c6"></div>
<div class="a" style="left:5px;top:476px;width:640px;height:10px;box-shadow:inset 1px 1px #c8c8c8"></div>
<div class="a t" style="left:7px;top:477.5px;color:#3a3a5a">Prêt</div>
<div class="a" style="left:645px;top:476px;width:1px;height:10px;background:#cfcfcf"></div>
<div class="a" style="left:656.5px;top:476px;width:1px;height:10px;background:#cfcfcf"></div>
<div class="a" style="left:674px;top:476px;width:1px;height:10px;background:#cfcfcf"></div>
<div class="a" style="left:689.5px;top:476px;width:1px;height:10px;background:#cfcfcf"></div>
<div class="a" style="left:705.5px;top:476px;width:1px;height:10px;background:#cfcfcf"></div>
<div class="a" style="left:723.5px;top:476px;width:1px;height:10px;background:#cfcfcf"></div>
<div class="a" style="left:745px;top:476px;width:1px;height:10px;background:#cfcfcf"></div>
<div class="a" style="left:765px;top:476px;width:1px;height:10px;background:#cfcfcf"></div>
<div class="a" style="left:780px;top:476px;width:1px;height:10px;background:#cfcfcf"></div>
<div class="a" style="left:795.5px;top:476px;width:1px;height:10px;background:#cfcfcf"></div>
<div class="a t" style="left:748.5px;top:477.5px;color:#404060;font-size:6.5px">NUM</div>
<div class="a" style="left:0;top:487px;width:800px;height:13px;background:linear-gradient(#303030,#141414 50%,#0a0a0a)"></div>
<svg style="left:0;top:487px" width="800" height="13" viewBox="0 0 800 13">
<g fill="#d8d8d8"><path d="M18.5 2.2l2.2 2.2-2.2 2.2-2.2-2.2z"/><path d="M16 4.7l2.2 2.2-2.2 2.2-2.2-2.2z" fill="#b0b0b0"/><path d="M21 4.7l2.2 2.2-2.2 2.2-2.2-2.2z" fill="#f0f0f0"/><path d="M18.5 7.2l2.2 2.2-2.2 2.2-2.2-2.2z" fill="#a0a0a0"/></g><rect x="42" y="2.5" width="10" height="8.5" fill="#c8d0e0"/><rect x="43" y="3.5" width="8" height="6" fill="#3a80e0"/><rect x="43" y="9" width="8" height="1" fill="#303a50"/><circle cx="61" cy="7" r="4.6" fill="#2a5ab8"/><circle cx="61" cy="6" r="3" fill="#6aa0e8"/><path d="M57 7.5q3-2 7 0l-1 2.5q-3 1-5-1z" fill="#f0a030"/><path d="M72 9l4-5 3 2-4 5z" fill="#909898"/><path d="M76 3l3 0 1 3-2 1z" fill="#40c030"/><path d="M86 6l4.5-3.5 4.5 3.5-4.5 5z" fill="#a0c8f0"/><path d="M88 6.5l2.5 2 3-4" stroke="#30a040" stroke-width="1.2" fill="none"/><circle cx="102" cy="4.5" r="1.8" fill="#4a90e0"/><path d="M99.5 10v-2.5q2.5-2 5 0v2.5z" fill="#3a80d0"/><circle cx="106" cy="5.5" r="2" fill="#50c040"/><path d="M103.5 11.5v-3q2.5-2 5 0v3z" fill="#40b030"/><circle cx="119" cy="7" r="3.8" fill="none" stroke="#a0a0a0" stroke-width="1.6"/><path d="M119 3.2a3.8 3.8 0 0 1 3.8 3.8" stroke="#e03020" stroke-width="1.6" fill="none"/><path d="M116 10l-2 2" stroke="#a0a0a0" stroke-width="1.4"/><circle cx="133.5" cy="7" r="4" fill="#2a90e0"/><circle cx="133" cy="6.5" r="2.2" fill="#60d060"/><ellipse cx="133.5" cy="7" rx="5.5" ry="2" fill="none" stroke="#f0c040" stroke-width=".9" transform="rotate(-25 133.5 7)"/><path d="M154 5l2 2-2 2M156.5 5l2 2-2 2" stroke="#fff" stroke-width="1" fill="none"/><rect x="533.75" y="0" width="34" height="13" fill="#3a72b8"/><rect x="533.75" y="0" width="34" height="4" fill="#5a92d0" opacity=".6"/><rect x="169.5" y="2" width="7.5" height="7.5" fill="#dfe8f6" stroke="#8a98a8" stroke-width=".6"/><rect x="169.5" y="2" width="7.5" height="1.8" fill="#8a98a8"/><rect x="168" y="4" width="7" height="7.5" fill="#f4f8fc" stroke="#8a98a8" stroke-width=".6"/><rect x="168" y="4" width="7" height="1.8" fill="#8a98a8"/><text x="180" y="9.5" font-family="Liberation Sans" font-size="7" fill="#d8d8d8">P..</text><path d="M202 2.5h5l2 2v7h-7z" fill="#f4f6fa"/><rect x="202" y="2.5" width="2" height="9" fill="#5a8ad0"/><path d="M204.5 6h3.5M204.5 8h3.5" stroke="#5a8ad0" stroke-width=".7"/><text x="213.75" y="9.5" font-family="Liberation Sans" font-size="7" fill="#d8d8d8">V..</text><path d="M236 11.5h9l-3.5 -9h-2z" fill="#f08010"/><path d="M238 8h5" stroke="#fff"/><text x="247.5" y="9.5" font-family="Liberation Sans" font-size="7" fill="#d8d8d8">L..</text><path d="M268.75 2.5h5.5l2 2v7h-7.5z" fill="#f4f6fa"/><rect x="268.75" y="2.5" width="2" height="9" fill="#5a8ad0"/><path d="M271.25 6h4.0M271.25 8h4.0" stroke="#5a8ad0" stroke-width=".7"/><text x="282" y="9.5" font-family="Liberation Sans" font-size="7" fill="#d8d8d8">T..</text><rect x="302.5" y="2" width="9" height="2.5" fill="#e01010"/><rect x="303.5" y="4" width="8" height="7.5" fill="#fafafa"/><path d="M304.5 10.5q2-4 3-6q1 4 3 5q-3 0-6 1z" fill="none" stroke="#d01010" stroke-width=".8"/><text x="315" y="9.5" font-family="Liberation Sans" font-size="7" fill="#d8d8d8">T..</text><rect x="338.5" y="2" width="6.5" height="7.5" fill="#dfe8f6" stroke="#3a6ac0" stroke-width=".6"/><rect x="338.5" y="2" width="6.5" height="1.8" fill="#3a6ac0"/><rect x="337" y="4" width="6" height="7.5" fill="#f4f8fc" stroke="#3a6ac0" stroke-width=".6"/><rect x="337" y="4" width="6" height="1.8" fill="#3a6ac0"/><text x="349.25" y="9.5" font-family="Liberation Sans" font-size="7" fill="#d8d8d8">M..</text><rect x="372.75" y="2" width="7.5" height="7.5" fill="#dfe8f6" stroke="#5a8ad0" stroke-width=".6"/><rect x="372.75" y="2" width="7.5" height="1.8" fill="#5a8ad0"/><rect x="371.25" y="4" width="7" height="7.5" fill="#f4f8fc" stroke="#5a8ad0" stroke-width=".6"/><rect x="371.25" y="4" width="7" height="1.8" fill="#5a8ad0"/><text x="383.75" y="9.5" font-family="Liberation Sans" font-size="7" fill="#d8d8d8">C..</text><path d="M403.75 2.5h5.5l2 2v7h-7.5z" fill="#f4f6fa"/><rect x="403.75" y="2.5" width="2" height="9" fill="#5a8ad0"/><path d="M406.25 6h4.0M406.25 8h4.0" stroke="#5a8ad0" stroke-width=".7"/><text x="416.25" y="9.5" font-family="Liberation Sans" font-size="7" fill="#d8d8d8">T..</text><rect x="439.0" y="2" width="8.5" height="7.5" fill="#dfe8f6" stroke="#5a8ad0" stroke-width=".6"/><rect x="439.0" y="2" width="8.5" height="1.8" fill="#5a8ad0"/><rect x="437.5" y="4" width="8" height="7.5" fill="#f4f8fc" stroke="#5a8ad0" stroke-width=".6"/><rect x="437.5" y="4" width="8" height="1.8" fill="#5a8ad0"/><text x="450" y="9.5" font-family="Liberation Sans" font-size="7" fill="#d8d8d8">C..</text><rect x="473.25" y="2" width="8.0" height="7.5" fill="#dfe8f6" stroke="#5a8ad0" stroke-width=".6"/><rect x="473.25" y="2" width="8.0" height="1.8" fill="#5a8ad0"/><rect x="471.75" y="4" width="7.5" height="7.5" fill="#f4f8fc" stroke="#5a8ad0" stroke-width=".6"/><rect x="471.75" y="4" width="7.5" height="1.8" fill="#5a8ad0"/><text x="484.5" y="9.5" font-family="Liberation Sans" font-size="7" fill="#d8d8d8">G..</text><rect x="506.5" y="2" width="8.5" height="7.5" fill="#dfe8f6" stroke="#909aa8" stroke-width=".6"/><rect x="506.5" y="2" width="8.5" height="1.8" fill="#909aa8"/><rect x="505" y="4" width="8" height="7.5" fill="#f4f8fc" stroke="#909aa8" stroke-width=".6"/><rect x="505" y="4" width="8" height="1.8" fill="#909aa8"/><text x="517.5" y="9.5" font-family="Liberation Sans" font-size="7" fill="#d8d8d8">M..</text><rect x="542.75" y="2" width="7.5" height="7.5" fill="#dfe8f6" stroke="#6a9ae0" stroke-width=".6"/><rect x="542.75" y="2" width="7.5" height="1.8" fill="#6a9ae0"/><rect x="541.25" y="4" width="7" height="7.5" fill="#f4f8fc" stroke="#6a9ae0" stroke-width=".6"/><rect x="541.25" y="4" width="7" height="1.8" fill="#6a9ae0"/><text x="552.5" y="9.5" font-family="Liberation Sans" font-size="7" fill="#fff">r..</text><path d="M572.5 11.5h8l-3.0 -9h-2z" fill="#f08010"/><path d="M574.5 8h4" stroke="#fff"/><circle cx="587.0" cy="7" r="4.5" fill="#e0e0e0"/><circle cx="586.0" cy="6" r="2.25" fill="#999" opacity=".7"/><circle cx="598.25" cy="7" r="4.5" fill="#f09020"/><circle cx="597.25" cy="6" r="2.25" fill="#ffd080" opacity=".7"/><circle cx="609.5" cy="7" r="4.5" fill="#c0c0c0"/><circle cx="608.5" cy="6" r="2.25" fill="#fff" opacity=".7"/><rect x="619.0" y="2" width="6.5" height="7.5" fill="#dfe8f6" stroke="#f0a020" stroke-width=".6"/><rect x="619.0" y="2" width="6.5" height="1.8" fill="#f0a020"/><rect x="617.5" y="4" width="6" height="7.5" fill="#f4f8fc" stroke="#f0a020" stroke-width=".6"/><rect x="617.5" y="4" width="6" height="1.8" fill="#f0a020"/><circle cx="632.5" cy="7" r="5.0" fill="#2a70c0"/><circle cx="631.5" cy="6" r="2.5" fill="#fff" opacity=".7"/><rect x="640.25" y="2" width="8.5" height="7.5" fill="#dfe8f6" stroke="#80a8d0" stroke-width=".6"/><rect x="640.25" y="2" width="8.5" height="1.8" fill="#80a8d0"/><rect x="638.75" y="4" width="8" height="7.5" fill="#f4f8fc" stroke="#80a8d0" stroke-width=".6"/><rect x="638.75" y="4" width="8" height="1.8" fill="#80a8d0"/><circle cx="655.0" cy="7" r="5.0" fill="#40a040"/><circle cx="654.0" cy="6" r="2.5" fill="#3070d0" opacity=".7"/><circle cx="666.25" cy="7" r="5.0" fill="#4080d0"/><circle cx="665.25" cy="6" r="2.5" fill="#e03030" opacity=".7"/><path d="M673 7l6-4v8z" fill="#d03020"/><path d="M684 3h9v4q0 4-4.5 5q-4.5-1-4.5-5z" fill="#d03030"/><path d="M688.5 3v9M684 7h9" stroke="#fff" stroke-width=".8"/><text x="695" y="9" font-family="Liberation Sans" font-size="9" font-weight="bold" fill="#e02020">S</text><text x="700" y="12" font-family="Liberation Sans" font-size="5" fill="#30c030">2f</text><circle cx="711.25" cy="7" r="5.0" fill="#f07010"/><circle cx="710.25" cy="6" r="2.5" fill="#fff" opacity=".7"/><path d="M719 11h1v-1h1v1h1v-3h1v3" stroke="#999" stroke-width=".8" fill="none"/><path d="M723 8l4 4M727 8l-4 4" stroke="#e02020" stroke-width="1.2"/><rect x="729" y="3" width="8" height="6" fill="#909090"/><path d="M733 8l4 4M737 8l-4 4" stroke="#e02020" stroke-width="1.2"/><circle cx="744.375" cy="7" r="4.375" fill="#3a5ab8"/><circle cx="743.375" cy="6" r="2.1875" fill="#fff" opacity=".7"/><rect x="751.5" y="2" width="9.5" height="7.5" fill="#dfe8f6" stroke="#2a6ac0" stroke-width=".6"/><rect x="751.5" y="2" width="9.5" height="1.8" fill="#2a6ac0"/><rect x="750" y="4" width="9" height="7.5" fill="#f4f8fc" stroke="#2a6ac0" stroke-width=".6"/><rect x="750" y="4" width="9" height="1.8" fill="#2a6ac0"/><path d="M763 5h2l2-2v8l-2-2h-2z" fill="#fff"/><text x="768.75" y="9.5" font-family="Liberation Sans" font-size="7" fill="#fff">0</text><text x="777.5" y="9.5" font-family="Liberation Sans" font-size="7" fill="#fff">13:56</text>
</svg>
</body></html>
